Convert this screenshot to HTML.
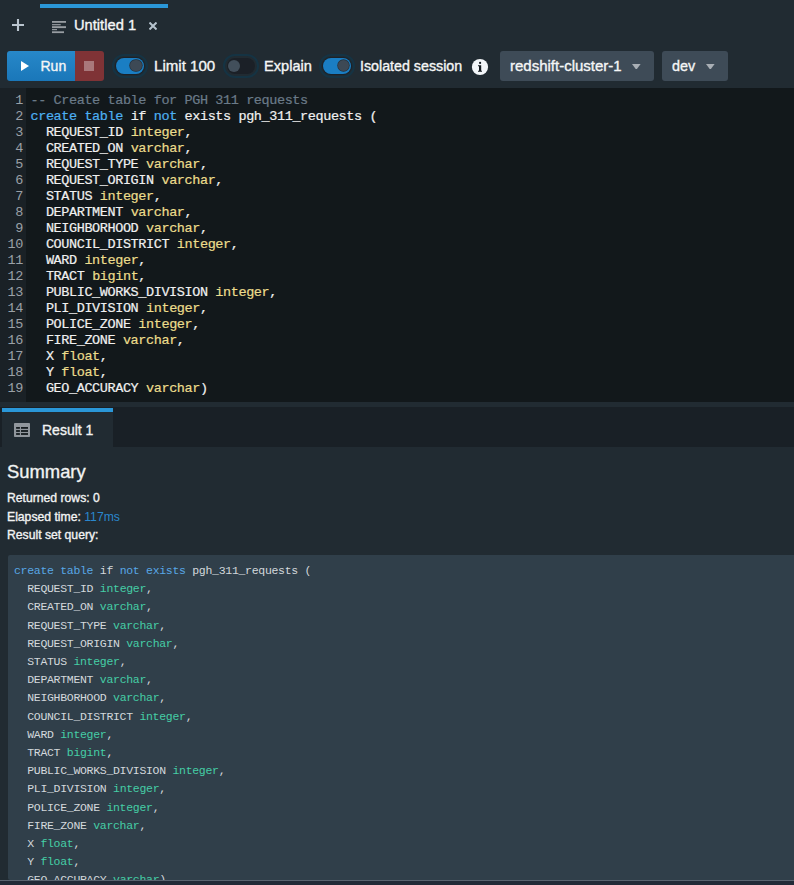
<!DOCTYPE html>
<html><head><meta charset="utf-8">
<style>
*{box-sizing:border-box;margin:0;padding:0}
html,body{width:794px;height:885px;overflow:hidden;background:#212b32;font-family:"Liberation Sans",sans-serif;color:#f2f3f3}
.st{-webkit-text-stroke:0.35px currentColor}
.abs{position:absolute}
#plus{left:12px;top:18.9px;width:12px;height:12px}
#tabbar{left:40px;top:4px;width:128px;height:4px;background:#2a97d8}
#docicon{left:52px;top:20.8px}
#tabtitle{left:74px;top:16px;font-size:14.7px;line-height:18px;color:#f5f6f6}
#tabx{left:149px;top:22px}
#run{left:7px;top:51px;width:68px;height:30px;border-radius:3px 0 0 3px;background:linear-gradient(#2788c9,#1a77b9)}
#stop{left:75px;top:51px;width:29px;height:30px;border-radius:0 3px 3px 0;background:#7f3336}
#stopsq{left:84px;top:61px;width:10px;height:10px;background:#a9787b}
.lbl{font-size:14.6px;line-height:18px;top:57px;color:#f5f6f6}
.tog{width:35.5px;height:23.7px;top:54px;border-radius:12px;border:2px solid #153343}
.trk{position:absolute;left:1.8px;top:1.9px;width:28px;height:16px;border-radius:8px}
.on{background:#1a7ec3;box-shadow:0 0 0 1px #1a2229}
.on .knob{left:14.6px;box-shadow:0 0 0 0.7px #26303a}
.off{background:#1b2027}
.off .knob{left:1.4px;top:2px;width:12px;height:12px;background:#424f5b}
.knob{position:absolute;top:2.4px;width:11.2px;height:11.2px;border-radius:50%;background:#3d4955}
.dd{top:51px;height:30px;border-radius:3px;background:#3e4b57}
#editor{left:0;top:88px;width:794px;height:314px;background:#12181b}
#gutter{left:0;top:88px;width:26px;height:314px;background:#1a2126}
.code{font-family:"Liberation Mono",monospace;font-size:13.5px;letter-spacing:-0.4px;line-height:16px;white-space:pre;-webkit-text-stroke:0.2px currentColor}
#lnums{left:0;top:93px;width:23px;text-align:right;color:#9aa0a6}
#src{left:30.5px;top:93px;color:#f0f0f0}
.k{color:#4db0f2}.t{color:#ecdd8c}.c{color:#6b7b89}
#rbar{left:0;top:407px;width:794px;height:40px;background:#192026}
#rtab{left:2px;top:408px;width:111px;height:39px;background:#212b32;border-top:4px solid #2a97d8}
#rtitle{left:42px;top:420.5px;font-size:14px;line-height:18px}
#summary{left:7px;top:461px;font-size:18.4px;line-height:22px}
.row{left:7px;font-size:12.2px;line-height:16px}
#qbox{left:8px;top:555px;width:786px;height:325px;background:#303f4a;overflow:hidden;border-radius:2px 0 0 2px}
.q{font-family:"Liberation Mono",monospace;font-size:11.5px;letter-spacing:-0.3px;line-height:18.2px;white-space:pre}
#qsrc{left:6px;top:7px;color:#d3d8dc}
.qk{color:#58a7e6}.qt{color:#45cea6}
#bline{left:0;top:880px;width:794px;height:1px;background:#5a6470}
#bbot{left:0;top:881px;width:794px;height:4px;background:#222a37}
</style></head><body>
<!-- top tabs -->
<svg class="abs" id="plus" viewBox="0 0 12 12"><path d="M6 0V12M0 6H12" stroke="#bac5cf" stroke-width="2.1"/></svg>
<div class="abs" id="tabbar"></div>
<svg class="abs" id="docicon" width="14" height="13" viewBox="0 0 14 13"><g fill="#989da2"><rect x="0" y="0" width="14" height="1.8"/><rect x="0" y="3.1" width="8.7" height="1.2"/><rect x="0" y="5.2" width="14" height="1.9"/><rect x="0" y="8.05" width="5" height="1.15"/><rect x="0" y="10.3" width="12" height="1.8"/></g></svg>
<div class="st abs" id="tabtitle">Untitled 1</div>
<svg class="abs" id="tabx" width="8" height="8" viewBox="0 0 8 8"><path d="M0.5 0.5L7.5 7.5M7.5 0.5L0.5 7.5" stroke="#b6c3ce" stroke-width="2"/></svg>

<!-- toolbar -->
<div class="abs" id="run"></div>
<svg class="abs" style="left:21px;top:61px" width="8" height="10" viewBox="0 0 8 10"><path d="M0 0L8 5L0 10Z" fill="#fff"/></svg>
<div class="st abs lbl" style="left:40.5px;font-size:14px">Run</div>
<div class="abs" id="stop"></div>
<div class="abs" id="stopsq"></div>

<div class="abs tog" style="left:112px"><div class="trk on"><div class="knob"></div></div></div>
<div class="st abs lbl" style="left:154px;font-size:15.1px">Limit 100</div>
<div class="abs tog" style="left:223.2px"><div class="trk off"><div class="knob"></div></div></div>
<div class="st abs lbl" style="left:264px">Explain</div>
<div class="abs tog" style="left:319.3px"><div class="trk on"><div class="knob"></div></div></div>
<div class="st abs lbl" style="left:360px;font-size:14.25px">Isolated session</div>
<svg class="abs" style="left:471px;top:58px" width="18" height="18" viewBox="0 0 18 18"><circle cx="9" cy="9" r="8.1" fill="#f3f6f9"/><path d="M7 7.3H10.2V12.7H11V13.8H7V12.7H8V8.2H7Z" fill="#141a1f"/><circle cx="9.1" cy="4.9" r="1.1" fill="#141a1f"/></svg>

<div class="abs dd" style="left:500px;width:154px"></div>
<div class="st abs lbl" style="left:510px;font-size:15px">redshift-cluster-1</div>
<svg class="abs" style="left:632px;top:63.6px" width="8.6" height="5.8" viewBox="0 0 8.6 5.8"><path d="M0 0H8.6L4.3 5.8Z" fill="#a9afb5"/></svg>
<div class="abs dd" style="left:662px;width:66px"></div>
<div class="st abs lbl" style="left:672px;font-size:14.4px">dev</div>
<svg class="abs" style="left:706px;top:63.6px" width="8.6" height="5.8" viewBox="0 0 8.6 5.8"><path d="M0 0H8.6L4.3 5.8Z" fill="#a9afb5"/></svg>

<!-- editor -->
<div class="abs" id="editor"></div>
<div class="abs" id="gutter"></div>
<div class="abs code" id="lnums" style="-webkit-text-stroke:0">1
2
3
4
5
6
7
8
9
10
11
12
13
14
15
16
17
18
19</div>
<div class="abs code" id="src"><span class="c">-- Create table for PGH 311 requests</span>
<span class="k">create</span> <span class="k">table</span> if <span class="k">not</span> exists pgh_311_requests (
  REQUEST_ID <span class="t">integer</span>,
  CREATED_ON <span class="t">varchar</span>,
  REQUEST_TYPE <span class="t">varchar</span>,
  REQUEST_ORIGIN <span class="t">varchar</span>,
  STATUS <span class="t">integer</span>,
  DEPARTMENT <span class="t">varchar</span>,
  NEIGHBORHOOD <span class="t">varchar</span>,
  COUNCIL_DISTRICT <span class="t">integer</span>,
  WARD <span class="t">integer</span>,
  TRACT <span class="t">bigint</span>,
  PUBLIC_WORKS_DIVISION <span class="t">integer</span>,
  PLI_DIVISION <span class="t">integer</span>,
  POLICE_ZONE <span class="t">integer</span>,
  FIRE_ZONE <span class="t">varchar</span>,
  X <span class="t">float</span>,
  Y <span class="t">float</span>,
  GEO_ACCURACY <span class="t">varchar</span>)</div>

<!-- results -->
<div class="abs" id="rbar"></div>
<div class="abs" id="rtab"></div>
<svg class="abs" style="left:14px;top:423px" width="16" height="14" viewBox="0 0 16 14"><rect x="0" y="0" width="16" height="14" rx="0.8" fill="#90969c"/><g fill="#151b1f"><rect x="2.1" y="4" width="3.8" height="1.8"/><rect x="7" y="4" width="7" height="1.8"/><rect x="2.1" y="7.1" width="3.8" height="1.8"/><rect x="7" y="7.1" width="7" height="1.8"/><rect x="2.1" y="10.1" width="3.8" height="1.8"/><rect x="7" y="10.1" width="7" height="1.8"/></g></svg>
<div class="st abs" id="rtitle">Result 1</div>

<div class="st abs" id="summary">Summary</div>
<div class="st abs row" style="top:490px">Returned rows: 0</div>
<div class="st abs row" style="top:509px">Elapsed time: <span style="color:#2a87cd;-webkit-text-stroke:0">117ms</span></div>
<div class="st abs row" style="top:527px">Result set query:</div>

<div class="abs" id="qbox"><div class="abs q" id="qsrc"><span class="qk">create</span> <span class="qk">table</span> if <span class="qk">not</span> <span class="qk">exists</span> pgh_311_requests (
  REQUEST_ID <span class="qt">integer</span>,
  CREATED_ON <span class="qt">varchar</span>,
  REQUEST_TYPE <span class="qt">varchar</span>,
  REQUEST_ORIGIN <span class="qt">varchar</span>,
  STATUS <span class="qt">integer</span>,
  DEPARTMENT <span class="qt">varchar</span>,
  NEIGHBORHOOD <span class="qt">varchar</span>,
  COUNCIL_DISTRICT <span class="qt">integer</span>,
  WARD <span class="qt">integer</span>,
  TRACT <span class="qt">bigint</span>,
  PUBLIC_WORKS_DIVISION <span class="qt">integer</span>,
  PLI_DIVISION <span class="qt">integer</span>,
  POLICE_ZONE <span class="qt">integer</span>,
  FIRE_ZONE <span class="qt">varchar</span>,
  X <span class="qt">float</span>,
  Y <span class="qt">float</span>,
  GEO_ACCURACY <span class="qt">varchar</span>)</div></div>
<div class="abs" id="bline"></div>
<div class="abs" id="bbot"></div>
</body></html>
